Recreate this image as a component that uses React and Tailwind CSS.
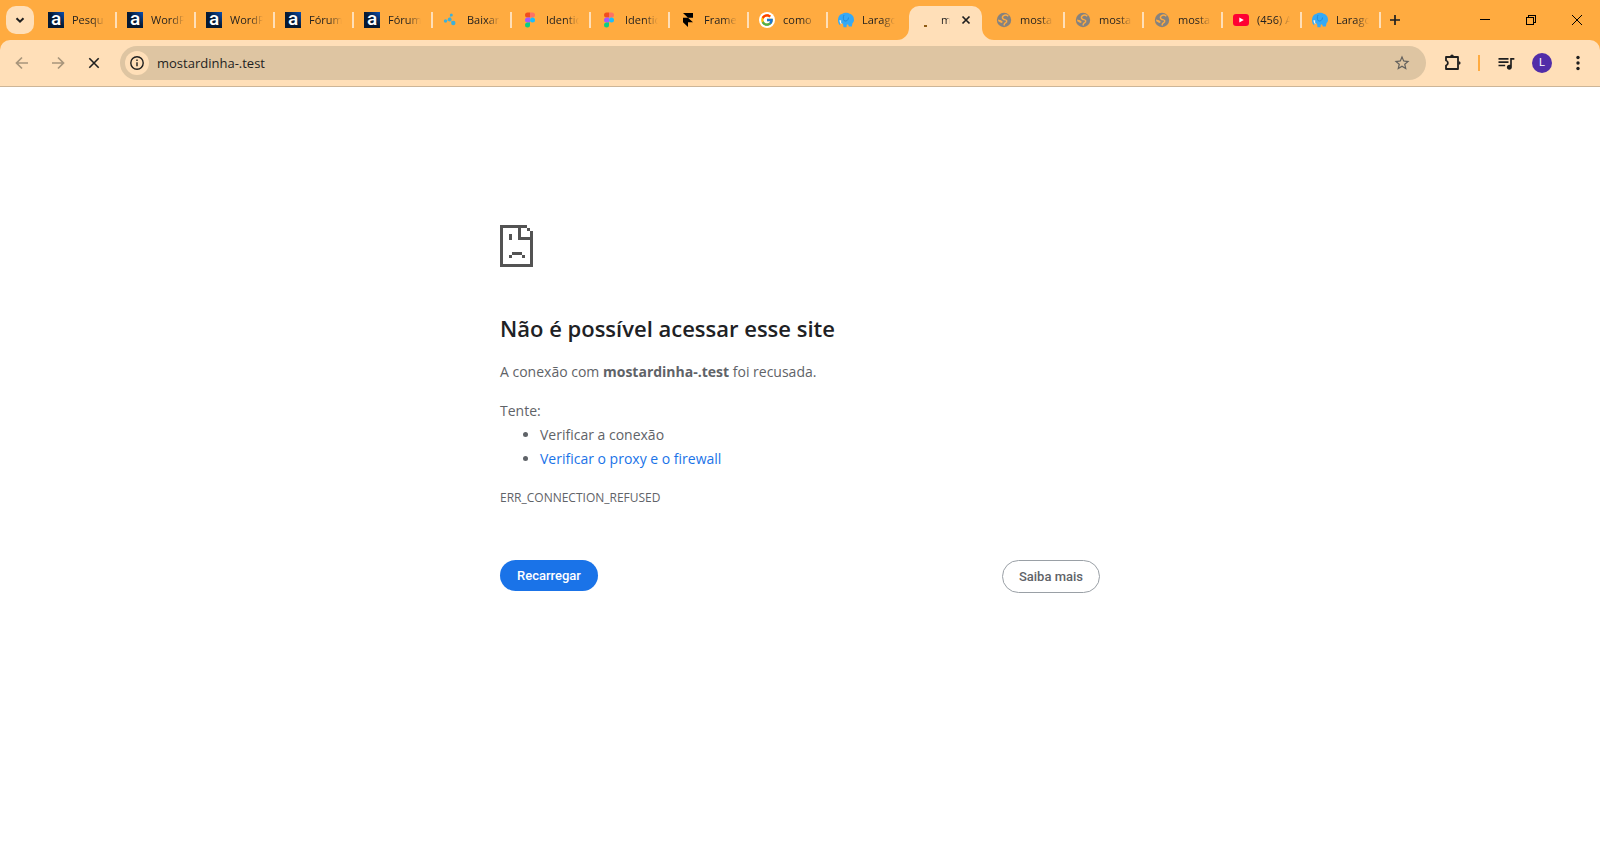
import React from "react";
import { FcGoogle } from "react-icons/fc";
import { MdStarBorder, MdQueueMusic } from "react-icons/md";

function AluraIcon() {
  return (
    <svg viewBox="0 0 16 16" className="size-4">
      <defs>
        <linearGradient id="alura" x1="0.3" y1="0.7" x2="1" y2="0">
          <stop offset="0.3" stopColor="#051933" />
          <stop offset="1" stopColor="#0a4fb4" />
        </linearGradient>
      </defs>
      <rect width="16" height="16" fill="url(#alura)" />
      <text x="8" y="13" textAnchor="middle" fontSize="19" fontWeight="500" fill="#fff" fontFamily="Roboto, sans-serif">a</text>
    </svg>
  );
}

function NodesIcon() {
  return (
    <svg viewBox="0 0 16 16" className="size-4">
      <path d="M8 3 6.700 7.500 10 11M3 9l3.700-1.500" fill="none" stroke="#7fb8a8" strokeWidth="0.700" />
      <g fill="#3fb0d8">
        <circle cx="8.300" cy="3" r="1.500" />
        <circle cx="6.700" cy="7.500" r="1.900" />
        <circle cx="2.500" cy="9" r="1.700" />
        <circle cx="10.300" cy="11" r="2.200" />
      </g>
    </svg>
  );
}

function FigmaIcon() {
  return (
    <svg viewBox="0 0 16 16" className="size-4">
      <path d="M5.500.5H8v5H5.500a2.500 2.500 0 0 1 0-5z" fill="#f24e1e" />
      <path d="M8 .5h2.500a2.500 2.500 0 0 1 0 5H8z" fill="#ff7262" />
      <path d="M5.500 5.500H8v5H5.500a2.500 2.500 0 0 1 0-5z" fill="#a259ff" />
      <circle cx="10.500" cy="8" r="2.500" fill="#1abcfe" />
      <path d="M5.500 10.500H8V13a2.500 2.500 0 1 1-2.500-2.500z" fill="#0acf83" />
    </svg>
  );
}

function FramerIcon() {
  return (
    <svg viewBox="0 0 16 16" className="size-4">
      <path d="M3 1h10v4.700H8zM3 5.700h5l5 4.600H3zM3 10.300h5V15z" fill="#000" />
    </svg>
  );
}

function GoogleIcon() {
  return (
    <span className="flex size-4 items-center justify-center rounded-full bg-white">
      <FcGoogle className="size-[14px]" />
    </span>
  );
}

function ElephantIcon() {
  return (
    <svg viewBox="0 0 16 16" className="size-4">
      <path d="M0 8.500C-.2 5 1.500 2.500 4 2 6 .5 10 .5 11.500 1.700 14.500 2.200 16 5 16 8c0 1.500-.8 2.500-1.500 3.200l-.7 3.300h-3l-.6-2H8.800L8.500 15.300H5.500L5 11.500 2.200 11.800v1.700C.8 12.500.1 10.500 0 8.500z" fill="#35a9f5" />
      <path d="M6 3c-1 2-1 4.500.5 6C8.500 9.500 10.500 8 10.500 5.500" fill="none" stroke="#1c83d6" strokeWidth="0.800" />
      <path d="M1.500 8c0 2.500.7 3.800 2.500 4.300C3 11 3 10 3.300 8.600z" fill="#fff4e4" />
    </svg>
  );
}

function GlobeIcon() {
  return (
    <svg viewBox="0 0 16 16" className="size-4">
      <circle cx="8" cy="8" r="7.200" fill="#85827f" />
      <path d="M12.300 4.200C10.500 2.600 8.500 3 7.300 3.800 6 4.800 6.200 6.500 7.500 7.200c1.300.600 2.800.4 3.200 1.600.4 1.200-.7 1.800-1.700 2.400-.8.500-.8 1.300-1 2.300" fill="none" stroke="#ffab40" strokeWidth="1.500" />
      <path d="M2 7.600 5 8.300l2 1.700-1.700 1L2.300 9.300z" fill="#ffab40" />
    </svg>
  );
}

function YoutubeIcon() {
  return (
    <svg viewBox="0 0 16 16" className="size-4">
      <rect y="2" width="16" height="12" rx="3" fill="#ff0033" />
      <path d="M6.300 5.500v5L10.800 8z" fill="#fff" />
    </svg>
  );
}

function LoadingIcon() {
  return (
    <svg viewBox="0 0 16 16" className="size-4" shapeRendering="crispEdges">
      <rect x="6" y="13" width="3" height="2" fill="#8f5c14" />
    </svg>
  );
}

function PuzzleIcon() {
  return (
    <svg viewBox="0 0 20 20" className="size-5" fill="none" stroke="currentColor" strokeWidth="1.800" strokeLinejoin="round">
      <path d="M4 4h12v12H4v-3.500a2.600 2.600 0 0 0 0-5z" />
      <path d="M8.200 3.200a1.800 1.800 0 0 1 3.600 0zM16.800 8.200a1.800 1.800 0 0 1 0 3.600z" fill="currentColor" stroke="none" />
    </svg>
  );
}

const tabs = [
  { title: "Pesqu", Icon: AluraIcon },
  { title: "WordP", Icon: AluraIcon },
  { title: "WordP", Icon: AluraIcon },
  { title: "Fórum", Icon: AluraIcon },
  { title: "Fórum", Icon: AluraIcon },
  { title: "Baixar", Icon: NodesIcon },
  { title: "Identid", Icon: FigmaIcon },
  { title: "Identid", Icon: FigmaIcon },
  { title: "Frame", Icon: FramerIcon },
  { title: "como", Icon: GoogleIcon },
  { title: "Larago", Icon: ElephantIcon, last: true },
  { title: "m", Icon: LoadingIcon, active: true },
  { title: "mosta", Icon: GlobeIcon },
  { title: "mosta", Icon: GlobeIcon },
  { title: "mosta", Icon: GlobeIcon },
  { title: "(456) A", Icon: YoutubeIcon },
  { title: "Larago", Icon: ElephantIcon },
];

function Tab({ title, Icon, last }) {
  return (
    <div className="flex w-[79px] items-center">
      <button role="tab" className="flex flex-1 items-center gap-2 pl-[10px]">
        <span className="flex size-4 shrink-0 items-center justify-center"><Icon /></span>
        <span className="w-[33px] overflow-hidden text-left whitespace-nowrap [mask-image:linear-gradient(to_right,black_60%,transparent)]">{title}</span>
      </button>
      {!last && <span className="h-4 w-[2px] bg-[#ffdfb8]" />}
    </div>
  );
}

function ActiveTab({ title, Icon }) {
  return (
    <div className="mr-1 ml-[2px] flex w-[73px] pt-[6px]">
      <div className="relative flex flex-1 items-center rounded-t-[10px] bg-[#ffdfb8] pr-[10px] pb-[6px] pl-[9px]">
        <svg viewBox="0 0 12 12" className="absolute bottom-0 -left-3 size-3"><path d="M12 0v12H0A12 12 0 0 0 12 0z" fill="#ffdfb8" /></svg>
        <svg viewBox="0 0 12 12" className="absolute -right-3 bottom-0 size-3"><path d="M0 0v12h12A12 12 0 0 1 0 0z" fill="#ffdfb8" /></svg>
        <button role="tab" aria-selected="true" className="flex flex-1 items-center gap-[7px]">
          <Icon />
          <span className="w-[9px] overflow-hidden text-left [mask-image:linear-gradient(to_right,black_60%,transparent)]">{title}</span>
        </button>
        <button aria-label="Fechar">
          <svg viewBox="0 0 12 12" className="size-3" stroke="#1f1f1f" strokeWidth="1.700"><path d="M2.500 2.500l7 7M9.500 2.500l-7 7" /></svg>
        </button>
      </div>
    </div>
  );
}

function TabStrip() {
  return (
    <header className="flex h-10 text-[11px] leading-4 text-[#1f1f1f]">
      <div className="flex w-[38px] items-center pl-[6px]">
        <button aria-label="Pesquisar guias" className="flex size-7 items-center justify-center rounded-[10px] bg-[#ffdfb8]">
          <svg viewBox="0 0 12 12" className="size-3" fill="none" stroke="#1f1f1f" strokeWidth="2"><path d="M2.500 4.200 6 7.700l3.500-3.500" /></svg>
        </button>
      </div>
      <div role="tablist" className="flex">
        {tabs.map((tab, i) => (tab.active ? <ActiveTab key={i} {...tab} /> : <Tab key={i} {...tab} />))}
      </div>
      <button aria-label="Nova guia" className="flex w-7 items-center justify-center">
        <svg viewBox="0 0 12 12" className="size-3" stroke="#1f1f1f" strokeWidth="1.700"><path d="M6 1v10M1 6h10" /></svg>
      </button>
      <div className="ml-auto flex">
        <button aria-label="Minimizar" className="flex w-[46px] items-center justify-center">
          <svg viewBox="0 0 10 10" className="size-[10px]" shapeRendering="crispEdges"><rect y="4" width="10" height="1" /></svg>
        </button>
        <button aria-label="Restaurar" className="flex w-[46px] items-center justify-center">
          <svg viewBox="0 0 10 10" className="size-[10px]" fill="none" stroke="#000" shapeRendering="crispEdges"><path d="M.5 2.500h7v7h-7zM2.500 2.500v-2h7v7h-2" /></svg>
        </button>
        <button aria-label="Fechar janela" className="flex w-[46px] items-center justify-center">
          <svg viewBox="0 0 10 10" className="size-[10px]" stroke="#000"><path d="M0 0l10 10M10 0 0 10" /></svg>
        </button>
      </div>
    </header>
  );
}

function Toolbar() {
  return (
    <div className="flex h-[47px] items-center rounded-t-[10px] border-b border-[#cdb597] bg-[#ffdfb8] px-1 text-[#1f1f1f]">
      <button aria-label="Voltar" className="flex w-9 justify-center text-[#a8957b]">
        <svg viewBox="0 0 16 16" className="size-4" fill="none" stroke="currentColor" strokeWidth="1.700"><path d="M14 8H3M8 2.500 2.500 8 8 13.500" /></svg>
      </button>
      <button aria-label="Avançar" className="flex w-9 justify-center text-[#a8957b]">
        <svg viewBox="0 0 16 16" className="size-4" fill="none" stroke="currentColor" strokeWidth="1.700"><path d="M2 8h11M8 2.500 13.500 8 8 13.500" /></svg>
      </button>
      <button aria-label="Parar" className="flex w-9 justify-center">
        <svg viewBox="0 0 16 16" className="size-4" stroke="currentColor" strokeWidth="1.600"><path d="M3.300 3.300l9.400 9.400M12.700 3.300l-9.400 9.400" /></svg>
      </button>
      <div className="ml-2 flex h-[34px] flex-1 items-center rounded-full bg-[#dec5a2] pr-[15px] pl-[5px]">
        <button aria-label="Informações do site" className="flex size-6 items-center justify-center rounded-full bg-[#ffdfb8]">
          <svg viewBox="0 0 14 14" className="size-[14px]" fill="none" stroke="#1f1f1f" strokeWidth="1.400"><circle cx="7" cy="7" r="6.200" /><path d="M7 6.200v4M7 3.600V5" /></svg>
        </button>
        <input aria-label="Endereço" defaultValue="mostardinha-.test" className="ml-2 min-w-0 flex-1 bg-transparent text-[13px] leading-5 outline-none" />
        <button aria-label="Favoritar"><MdStarBorder className="size-[18px] text-[#62605c]" /></button>
      </div>
      <button aria-label="Extensões" className="ml-2 flex w-9 justify-center"><PuzzleIcon /></button>
      <span className="mx-2 h-4 w-[2px] bg-[#ffab40]" />
      <button aria-label="Mídia" className="flex w-9 justify-center"><MdQueueMusic className="size-5" /></button>
      <button aria-label="Perfil" className="flex w-9 justify-center">
        <span className="flex size-5 items-center justify-center rounded-full bg-[#512da8] font-[Roboto] text-[11px] leading-4 text-white">L</span>
      </button>
      <button aria-label="Menu" className="flex w-9 justify-center">
        <svg viewBox="0 0 16 16" className="size-4" fill="currentColor"><circle cx="8" cy="2.500" r="1.700" /><circle cx="8" cy="8" r="1.700" /><circle cx="8" cy="13.500" r="1.700" /></svg>
      </button>
    </div>
  );
}

function SadPage() {
  return (
    <svg viewBox="0 0 33 42" className="h-[42px] w-[33px]" fill="#535353" shapeRendering="crispEdges">
      <path d="M0 0h27v3h-6v9h9V6h3v36H0zM3 3v36h27V15H18V3z" fillRule="evenodd" />
      <path d="M27 3h3v3h-3zM9 9h3v6H9zM12 27h10v3H12zM9 30h3v3H9zM22 30h3v3h-3z" />
    </svg>
  );
}

export default function App() {
  return (
    <div className="min-h-screen bg-white font-['Open_Sans',sans-serif]">
      <div className="bg-[#ffab40]">
        <TabStrip />
        <Toolbar />
      </div>
      <main className="mx-auto max-w-[600px] pt-[138px] text-[14px] leading-6 text-[#5f6368]">
        <SadPage />
        <h1 className="mt-[46px] text-[22px] leading-[30px] font-semibold text-[#202124]">Não é possível acessar esse site</h1>
        <p className="mt-[17px]">
          A conexão com <strong className="font-bold">mostardinha-.test</strong> foi recusada.
        </p>
        <p className="mt-[15px]">Tente:</p>
        <ul className="list-disc pl-10">
          <li>Verificar a conexão</li>
          <li><a href="#proxy" className="text-[#1a73e8]">Verificar o proxy e o firewall</a></li>
        </ul>
        <p className="mt-[15px] text-[12px] leading-6">ERR_CONNECTION_REFUSED</p>
        <div className="mt-[50px] flex items-start justify-between font-[Roboto,sans-serif] text-[13px] leading-[15px] font-medium">
          <button className="rounded-full bg-[#1a73e8] px-[17px] py-2 text-white">Recarregar</button>
          <button className="rounded-full border border-[#9aa0a6] px-4 py-2">Saiba mais</button>
        </div>
      </main>
    </div>
  );
}
